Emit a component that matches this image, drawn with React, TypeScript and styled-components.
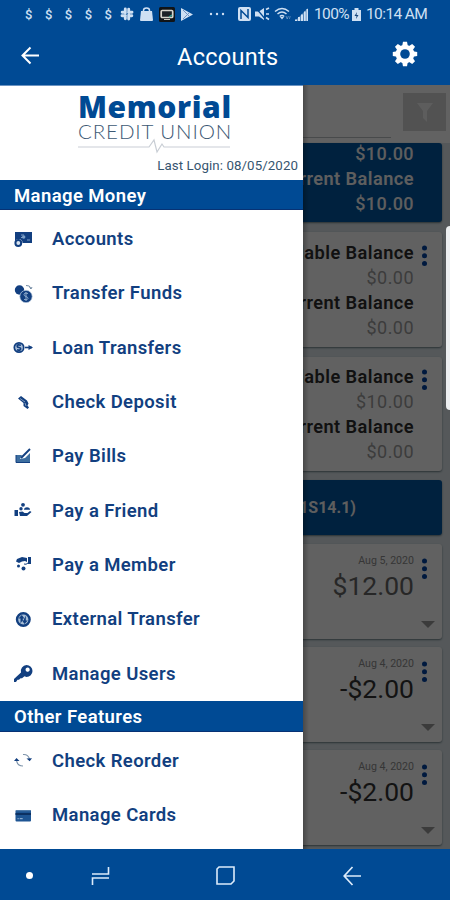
import React from "react";
import styled, { createGlobalStyle } from "styled-components";

const BLUE = "#004a94";
const INK = "#123f80";

const GlobalStyle = createGlobalStyle`
  *, *::before, *::after { box-sizing: border-box; }
  body { margin: 0; font-family: Roboto, "Liberation Sans", sans-serif; }
  svg { display: block; flex: none; }
`;

const Phone = styled.div`
  width: 450px;
  height: 900px;
  display: flex;
  flex-direction: column;
  overflow: hidden;
  background: ${BLUE};
`;

const StatusBar = styled.div`
  height: 28px;
  display: flex;
  align-items: center;
  padding: 0 22px 0 25px;
  color: #cfe0f3;
  font-size: 15.5px;
  white-space: nowrap;
`;

const Dollars = styled.div`
  display: flex;
  flex: none;
  width: 87px;
  justify-content: space-between;
  font-size: 13px;
  font-weight: 500;
`;

const StatusIcons = styled.div<{ $gap: number; $left?: number }>`
  display: flex;
  flex: none;
  align-items: center;
  gap: ${(p) => p.$gap}px;
  margin-left: ${(p) => p.$left ?? 0}px;
`;

const StatusText = styled.span<{ $width: number; $left: number }>`
  flex: none;
  width: ${(p) => p.$width}px;
  margin-left: ${(p) => p.$left}px;
  letter-spacing: -0.6px;
`;

const TopBar = styled.header`
  height: 57px;
  display: grid;
  grid-template-columns: 60px 1fr 90px;
  align-items: center;
  color: #fff;
`;

const TopTitle = styled.h1`
  margin: 1px 0 0 117px;
  font-size: 23.5px;
  font-weight: 400;
  letter-spacing: 0.3px;
  line-height: 30px;
`;

const IconButton = styled.button<{ $left: number; $up?: number }>`
  border: 0;
  padding: 0;
  background: none;
  color: #fff;
  margin: 0 0 ${(p) => p.$up ?? 0}px ${(p) => p.$left}px;
`;

const Stage = styled.main`
  position: relative;
  height: 764px;
  flex: none;
  overflow: hidden;
  background: #dbe3e8;
`;

const Page = styled.div`
  display: flex;
  flex-direction: column;
`;

const SearchRow = styled.div`
  height: 58px;
  display: flex;
  justify-content: space-between;
  padding: 8px 4px 0 12px;
  background: #fbfbfb;
`;

const SearchField = styled.div`
  width: 379px;
  height: 45px;
  border-bottom: 1px solid #b9bfc2;
`;

const FilterButton = styled.button`
  width: 43px;
  height: 38px;
  border: 0;
  padding: 0;
  background: #d2d2d2;
  display: grid;
  place-items: center;
`;

const Card = styled.section<{ $tone?: "blue"; $height: number; $gap: number }>`
  height: ${(p) => p.$height}px;
  width: 434px;
  margin: 0 0 ${(p) => p.$gap}px 8px;
  border-radius: 3px;
  display: flex;
  justify-content: flex-end;
  background: ${(p) => (p.$tone ? "#00559f" : "#fafafa")};
  color: ${(p) => (p.$tone ? "#f2f2f2" : "#2c2c2c")};
  box-shadow: 0 1px 2px #6d8088;
`;

const Balances = styled.div<{ $top: number; $right: number }>`
  display: flex;
  flex-direction: column;
  align-items: flex-end;
  margin-top: ${(p) => p.$top}px;
  margin-right: ${(p) => p.$right}px;
  white-space: nowrap;
`;

const BalanceLabel = styled.div`
  font-size: 18.2px;
  font-weight: 600;
  line-height: 25px;
  letter-spacing: 0.45px;
`;

const BalanceValue = styled.div<{ $bright?: boolean }>`
  font-size: 18px;
  line-height: 25px;
  letter-spacing: 0.45px;
  font-weight: ${(p) => (p.$bright ? 500 : 400)};
  color: ${(p) => (p.$bright ? "inherit" : "#9c9c9c")};
`;

const GroupTitle = styled.div`
  width: 348px;
  margin: auto auto auto 0;
  text-align: right;
  font-size: 16px;
  font-weight: 700;
  letter-spacing: 0;
`;

const Amounts = styled.div`
  display: flex;
  flex-direction: column;
  align-items: flex-end;
  padding-top: 9px;
`;

const PostDate = styled.div`
  font-size: 10.6px;
  line-height: 15px;
  color: #8c8c8c;
`;

const Amount = styled.div<{ $credit?: boolean }>`
  font-size: 26.5px;
  line-height: 36px;
  letter-spacing: 0;
  color: ${(p) => (p.$credit ? "#666" : "#333")};
`;

const CardActions = styled.div<{ $top: number }>`
  width: 28px;
  padding: ${(p) => p.$top}px 6px 11px 7px;
  display: flex;
  flex-direction: column;
  justify-content: space-between;
`;

const Scrim = styled.div`
  position: absolute;
  inset: 0;
  background: linear-gradient(to right, transparent 303px, rgba(0, 0, 0, 0.25) 303px, transparent 309px),
    rgba(0, 0, 0, 0.61);
`;

const EdgeHandle = styled.div`
  position: absolute;
  top: 141px;
  right: 0;
  width: 4px;
  height: 184px;
  border-radius: 4px 0 0 4px;
  background: #eceef0;
`;

const Drawer = styled.nav`
  position: absolute;
  inset: 0 auto 0 0;
  width: 303px;
  background: #fff;
  display: flex;
  flex-direction: column;
`;

const Brand = styled.div`
  height: 95px;
  flex: none;
  display: flex;
  flex-direction: column;
  padding-left: 78px;
  border-top: 1px solid #6b93c1;
`;

const BrandName = styled.div`
  margin-top: 6px;
  font-family: "Open Sans", sans-serif;
  font-size: 30px;
  font-weight: 800;
  line-height: 29px;
  letter-spacing: 0.6px;
  color: ${BLUE};
`;

const BrandSub = styled.div`
  font-family: Lato, sans-serif;
  font-size: 20.5px;
  font-weight: 300;
  line-height: 20px;
  letter-spacing: 0.9px;
  color: #3d5974;
  white-space: nowrap;
`;

const Pulse = styled.svg`
  margin-top: -3px;
`;

const LastLogin = styled.div`
  margin: 3px 5px 0 auto;
  font-size: 13.3px;
  line-height: 18px;
  letter-spacing: 0.08px;
  color: #36556f;
`;

const SectionBar = styled.h2<{ $height: number }>`
  height: ${(p) => p.$height}px;
  flex: none;
  margin: 0 0 2px;
  padding: 2px 0 0 14px;
  display: flex;
  align-items: center;
  background: ${BLUE};
  border-bottom: 1px solid #073274;
  color: #fff;
  font-size: 18.5px;
  font-weight: 600;
  letter-spacing: 0.4px;
`;

const MenuItem = styled.a`
  height: 54.3px;
  flex: none;
  display: flex;
  align-items: center;
  gap: 18px;
  padding-left: 13px;
  color: ${INK};
  font-size: 18.5px;
  font-weight: 600;
  letter-spacing: 0.38px;
`;

const BottomBar = styled.footer`
  height: 51px;
  flex: none;
  display: flex;
  align-items: center;
  padding: 2px 0 0 26px;
  color: #dcebfa;
`;

const NavSlot = styled.div<{ $left: number }>`
  margin-left: ${(p) => p.$left}px;
`;

type MenuKind =
  | "accounts" | "coins" | "loan" | "check" | "bills" | "friend"
  | "member" | "external" | "key" | "reorder" | "card";

const drawings: Record<MenuKind, React.ReactNode> = {
  accounts: (
    <>
      <path d="M2 2h17v11H9.500a4 4 0 0 0-7.500-2z" fill="currentColor" />
      <path d="M8 5h3M8 7.500h2M14 10h3" stroke="#7f9fc4" />
      <circle cx="10.700" cy="7" r="1.700" fill="#7c9fc6" />
      <circle cx="5.300" cy="13" r="2.900" fill="#d9e4f0" stroke="currentColor" strokeWidth="2" />
    </>
  ),
  coins: (
    <>
      <circle cx="6.500" cy="6" r="4.700" fill="currentColor" />
      <circle cx="13" cy="12.500" r="6.200" fill="currentColor" stroke="#c4d3e4" strokeWidth=".7" />
      <path d="M15 9.500q-4-1.500-4 1 0 1.500 2 2t2 2q0 2-4 1M13 8v9" fill="none" stroke="#8daacb" />
      <path d="M13 1.500q4-.5 5 3m-1.500-1L18 5l1-2" fill="none" stroke="#748ba4" />
    </>
  ),
  loan: (
    <>
      <circle cx="6" cy="9.500" r="4.700" fill="#a9bed8" stroke="currentColor" strokeWidth="1.700" />
      <path d="M8 7.300Q4 6 4.200 8.200q0 1 1.800 1.300t1.700 1.400Q7.500 13 4 11.700" fill="none" stroke="currentColor" strokeWidth="1.700" />
      <path d="M12 9.500h7" stroke="currentColor" strokeWidth="1.600" />
      <path d="M15.500 7 20 9.500 15.500 12z" fill="currentColor" />
    </>
  ),
  check: (
    <>
      <path d="m5 5.500 3-2.500 6 4.500 1.500 3-1 2 1.500 2-1.500 1.500-4-3V10z" fill="currentColor" />
      <path d="m7 5.500 5 3.500M12 10l1 3" stroke="#9db3cc" strokeWidth=".8" />
    </>
  ),
  bills: (
    <>
      <path d="M3 8h6l-2 4 5-1 5-5v9.500H3z" fill="#3d6e9f" />
      <path d="m8 11 9-9" stroke="currentColor" strokeWidth="1.900" />
      <path d="M3 8v7.500h14" fill="none" stroke="currentColor" />
    </>
  ),
  friend: (
    <>
      <path d="M1.500 9h3.500v6H1.500zM6 11l3.500-.5 2 1.500h3l2.500-2 1.500 1-4.500 4H7z" fill="currentColor" />
      <circle cx="10" cy="3.800" r="1.900" fill="currentColor" />
      <circle cx="8" cy="7.800" r="1.700" fill="currentColor" />
      <path d="M11 8.800q0-2.500 3-2.500t3 2.500z" fill="currentColor" />
    </>
  ),
  member: (
    <>
      <path d="M15 2h3v7h-3zM14 3v4l-2-1-3 .5L6 8 3 6.500 4 4l5-2z" fill="currentColor" />
      <circle cx="5.500" cy="11" r="1.500" fill="currentColor" />
      <circle cx="10.500" cy="13.500" r="2" fill="currentColor" />
      <path d="M11 9q2 1 4-1" stroke="currentColor" fill="none" />
    </>
  ),
  external: (
    <>
      <circle cx="10.300" cy="9.500" r="6.300" fill="#a9bfd6" stroke="currentColor" strokeWidth="2.400" />
      <path d="M7.500 13.500V8.500H5.500L8.800 5l2.700 3.500H9.800v1.500M12.800 5.500v5h2l-3.300 3.500L9 10.500h1.500" fill="currentColor" />
    </>
  ),
  key: (
    <path
      fillRule="evenodd"
      fill="currentColor"
      d="M13.500 1a6 6 0 0 1 0 12l-2-.7-2.500 2H7.500l-1.500 1.500H4.500L3 18H1v-3l7-6.500A6 6 0 0 1 13.500 1m-.2 3a2.100 2.100 0 1 0 3.400 2 2.100 2.100 0 0 0-3.400-2"
    />
  ),
  reorder: (
    <>
      <path d="M10 3.500q5-.5 6.500 4.500M10 15q-6 0-6.500-6" fill="none" stroke="#7d93aa" strokeWidth="1.100" />
      <path d="m13.500 7.500 5.500-.3-2.300 3zM1 10l2.500-3 3 3z" fill="currentColor" />
    </>
  ),
  card: (
    <>
      <rect x="2.500" y="4" width="15.500" height="11.500" rx="1" fill="#1e5593" />
      <path d="M3 4.700h14.500" stroke="#5d86b0" />
      <path d="M2.500 8H18" stroke="#0c3162" strokeWidth="2" />
      <path d="M4.500 12.700h1.200m1 0h3" stroke="#a8c1dc" />
    </>
  ),
};

const MenuIcon = ({ kind }: { kind: MenuKind }) => (
  <svg width="21" height="19" viewBox="0 0 21 19">{drawings[kind]}</svg>
);

const money: [MenuKind, string][] = [
  ["accounts", "Accounts"],
  ["coins", "Transfer Funds"],
  ["loan", "Loan Transfers"],
  ["check", "Check Deposit"],
  ["bills", "Pay Bills"],
  ["friend", "Pay a Friend"],
  ["member", "Pay a Member"],
  ["external", "External Transfer"],
  ["key", "Manage Users"],
];

const other: [MenuKind, string][] = [
  ["reorder", "Check Reorder"],
  ["card", "Manage Cards"],
];

const Kebab = () => (
  <svg width="7" height="22" viewBox="0 0 7 22" fill="#0042a0">
    <circle cx="3.500" cy="3" r="2.500" />
    <circle cx="3.500" cy="10.800" r="2.500" />
    <circle cx="3.500" cy="18.600" r="2.500" />
  </svg>
);

const Caret = () => (
  <svg width="14" height="7" viewBox="0 0 14 7"><path d="M0 0h14L7 7z" fill="#989898" /></svg>
);

const BalanceCard = ({ available, height, gap, top }: { available: string; height: number; gap: number; top: number }) => (
  <Card $height={height} $gap={gap}>
    <Balances $top={top} $right={0}>
      <BalanceLabel>Available Balance</BalanceLabel>
      <BalanceValue>{available}</BalanceValue>
      <BalanceLabel>Current Balance</BalanceLabel>
      <BalanceValue>$0.00</BalanceValue>
    </Balances>
    <CardActions $top={top + 5}><Kebab /></CardActions>
  </Card>
);

const Transaction = ({ date, amount, credit }: { date: string; amount: string; credit?: boolean }) => (
  <Card $height={95} $gap={8}>
    <Amounts>
      <PostDate>{date}</PostDate>
      <Amount $credit={credit}>{amount}</Amount>
    </Amounts>
    <CardActions $top={14}><Kebab /><Caret /></CardActions>
  </Card>
);

const BackArrow = () => (
  <svg width="20" height="20" viewBox="0 0 20 20" fill="none" stroke="currentColor" strokeWidth="2">
    <path d="M18 9.500H2M9.500 1.500 1.500 9.500l8 8" />
  </svg>
);

const Gear = () => (
  <svg width="26" height="26" viewBox="-13 -13 26 26">
    <g fill="#fff">
      {[0, 45, 90, 135].map((a) => (
        <path key={a} transform={`rotate(${a})`} d="M-2.800-8-2-12.200h4L2.800-8v16L2 12.200h-4L-2.800 8z" />
      ))}
      <circle r="9.300" />
    </g>
    <circle r="4.800" fill={BLUE} />
  </svg>
);

const LeftStatus = () => (
  <StatusIcons $gap={6} $left={8}>
    <svg width="14" height="14" viewBox="0 0 14 14" stroke="currentColor" strokeWidth="2.900" strokeLinecap="round">
      <path d="M5.300 2v4M8.700 2.200v2M2 8.700h3.500M2.200 5.300h2M8.700 8v4M5.300 10v1.800M8.500 5.300H12M10 8.700h1.800" />
    </svg>
    <svg width="13" height="14" viewBox="0 0 13 14">
      <path d="M1 4h11l1 9q0 1-1 1H1q-1 0-1-1z" fill="currentColor" />
      <path d="M3.500 6V3.500q0-2.500 3-2.500t3 2.500V6" fill="none" stroke="currentColor" strokeWidth="1.500" />
    </svg>
    <svg width="16" height="15" viewBox="0 0 16 15">
      <rect width="16" height="15" rx="1.500" fill="#101418" />
      <rect x="2.200" y="3.500" width="11.500" height="7" rx="1" fill="#1b2228" stroke="#d6d5ce" strokeWidth="1.700" />
      <path d="M5 12.500h6" stroke="#c5c5bd" />
      <path d="m10 10 3-2" stroke="#39a396" strokeWidth="1.500" />
    </svg>
    <svg width="13" height="13" viewBox="0 0 13 13">
      <path d="M0 0 12 6.500 0 13z" fill="currentColor" />
      <path d="m2 2 6 6M2 11l6-6" stroke="#7193c2" />
    </svg>
  </StatusIcons>
);

const RightStatus = () => (
  <StatusIcons $gap={4} $left={13}>
    <svg width="13" height="14" viewBox="0 0 13 14">
      <rect width="13" height="14" rx="2" fill="currentColor" />
      <path d="M3 12V3.500l7 7V2" fill="none" stroke={BLUE} strokeWidth="1.500" />
    </svg>
    <svg width="15" height="14" viewBox="0 0 15 14">
      <path d="M0 4.500h4L9 1v12L4 9.500H0z" fill="currentColor" />
      <path d="m1 1 10 12" stroke={BLUE} strokeWidth="1.200" />
      <path d="M11 2.500 14 1M11 7h3M11 10.500l3 2" stroke="currentColor" strokeWidth="1.600" />
    </svg>
    <svg width="17" height="14" viewBox="0 0 17 14" fill="none" stroke="currentColor" strokeWidth="1.500">
      <path d="M1 4.500q7-6 14 0M3.500 7q4.500-4 9 0M5.800 9.500q2.200-2 4.400 0" />
      <path d="m6 10 2 2.500 2-2.500z" fill="currentColor" stroke="none" />
      <path d="m12 9 1.200 3 1.200-3m1 3 .8-3" strokeWidth=".8" opacity=".5" />
    </svg>
    <svg width="13" height="13" viewBox="0 0 13 13" fill="currentColor">
      <path d="M0 13 13 0v13z" opacity=".4" />
      <path d="M0 11.500h2V13H0zM3 9h2v4H3zM6 6.500h2V13H6zM9 3.500h1.700V13H9zM11.500 1H13v12h-1.500z" />
    </svg>
  </StatusIcons>
);

export default function App() {
  return (
    <Phone>
      <GlobalStyle />
      <StatusBar>
        <Dollars>
          {[0, 1, 2, 3, 4].map((n) => <span key={n}>$</span>)}
        </Dollars>
        <LeftStatus />
        <StatusIcons $gap={0} $left={15}>
          <svg width="16" height="4" viewBox="0 0 16 4" fill="currentColor">
            <circle cx="2" cy="2" r="1.200" /><circle cx="8" cy="2" r="1.200" /><circle cx="14" cy="2" r="1.200" />
          </svg>
        </StatusIcons>
        <RightStatus />
        <StatusText $width={34} $left={6}>100%</StatusText>
        <StatusIcons $gap={0} $left={4}>
          <svg width="9" height="13" viewBox="0 0 9 13">
            <path d="M0 2h2.500V0h4v2H9v11H0z" fill="currentColor" />
            <path d="M5 4 2.500 8h2L4 11l2.500-4h-2z" fill="#16447a" />
          </svg>
        </StatusIcons>
        <StatusText $width={60} $left={5}>10:14 AM</StatusText>
      </StatusBar>
      <TopBar>
        <IconButton $left={21} $up={1} aria-label="Back"><BackArrow /></IconButton>
        <TopTitle>Accounts</TopTitle>
        <IconButton $left={32} $up={6} aria-label="Settings"><Gear /></IconButton>
      </TopBar>
      <Stage>
        <Page>
          <SearchRow>
            <SearchField />
            <FilterButton aria-label="Filter">
              <svg width="16" height="19" viewBox="0 0 16 19"><path d="M0 0h16l-6 8v11l-4-4V8z" fill="#f0f0f0" /></svg>
            </FilterButton>
          </SearchRow>
          <Card $tone="blue" $height={79} $gap={10}>
            <Balances $top={-2} $right={28}>
              <BalanceValue $bright>$10.00</BalanceValue>
              <BalanceLabel>Current Balance</BalanceLabel>
              <BalanceValue $bright>$10.00</BalanceValue>
            </Balances>
          </Card>
          <BalanceCard available="$0.00" height={115} gap={10} top={8} />
          <BalanceCard available="$10.00" height={114} gap={9} top={7} />
          <Card $tone="blue" $height={55} $gap={9}>
            <GroupTitle>Share Draft (1S14.1)</GroupTitle>
          </Card>
          <Transaction date="Aug 5, 2020" amount="$12.00" credit />
          <Transaction date="Aug 4, 2020" amount="-$2.00" />
          <Transaction date="Aug 4, 2020" amount="-$2.00" />
        </Page>
        <Scrim />
        <EdgeHandle />
        <Drawer>
          <Brand>
            <BrandName>Memorial</BrandName>
            <BrandSub>CREDIT UNION</BrandSub>
            <Pulse width="154" height="16" viewBox="0 0 154 16" fill="none" stroke="#c9ced5" strokeWidth="1.200">
              <path d="M0 9h71l5-7 3 12 5-8 2 3h66" />
            </Pulse>
            <LastLogin>Last Login: 08/05/2020</LastLogin>
          </Brand>
          <SectionBar $height={30}>Manage Money</SectionBar>
          {money.map(([kind, label]) => (
            <MenuItem key={label}><MenuIcon kind={kind} />{label}</MenuItem>
          ))}
          <SectionBar $height={31}>Other Features</SectionBar>
          {other.map(([kind, label]) => (
            <MenuItem key={label}><MenuIcon kind={kind} />{label}</MenuItem>
          ))}
        </Drawer>
      </Stage>
      <BottomBar>
        <svg width="7" height="7" viewBox="0 0 7 7"><circle cx="3.500" cy="3.500" r="3.500" fill="#fff" /></svg>
        <NavSlot $left={58}>
          <svg width="19" height="20" viewBox="0 0 19 20" fill="none" stroke="currentColor" strokeWidth="1.600">
            <path d="M1 8h16.500V1M18 12H1.500v7" />
          </svg>
        </NavSlot>
        <NavSlot $left={106}>
          <svg width="19" height="19" viewBox="0 0 19 19" fill="none" stroke="currentColor" strokeWidth="1.600">
            <path d="M3 1h15v14l-3 3H1V3z" />
          </svg>
        </NavSlot>
        <NavSlot $left={108}>
          <svg width="18" height="20" viewBox="0 0 18 20" fill="none" stroke="currentColor" strokeWidth="1.700">
            <path d="M18 10H1.500M9.500 1 1.200 10l8.300 9" />
          </svg>
        </NavSlot>
      </BottomBar>
    </Phone>
  );
}
